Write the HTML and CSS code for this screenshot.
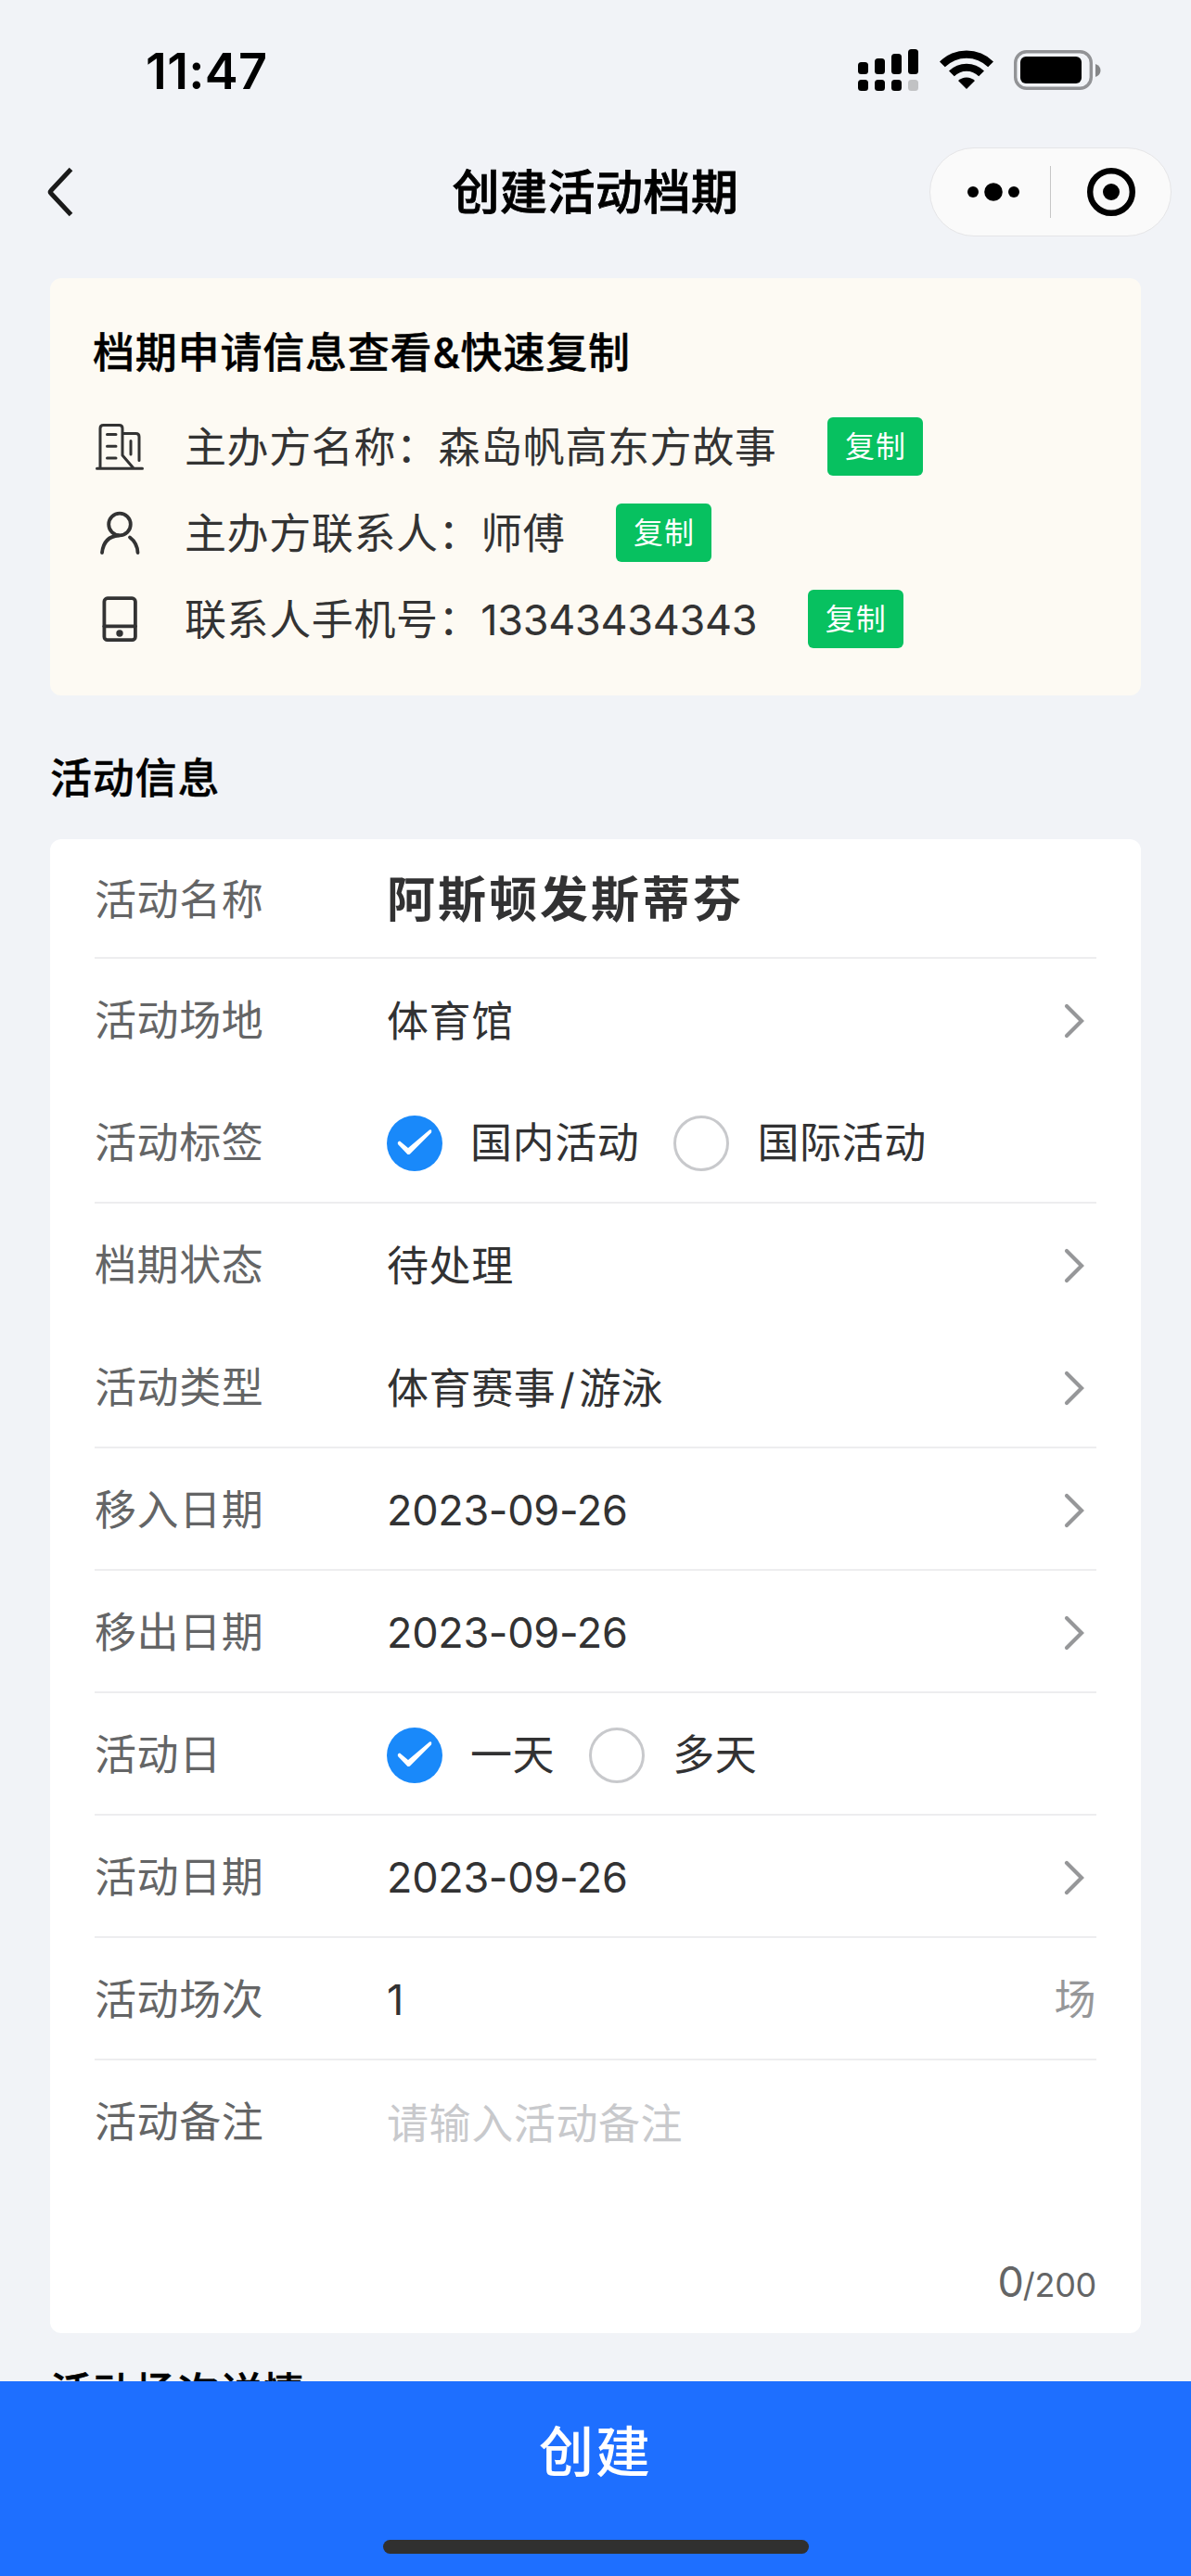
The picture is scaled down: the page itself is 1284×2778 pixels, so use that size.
FILE: index.html
```html
<!DOCTYPE html>
<html lang="zh-CN">
  <head>
    <meta charset="UTF-8" />
    <meta name="viewport" content="width=device-width, initial-scale=1.0" />
    <title>创建活动档期</title>
    <link rel="stylesheet" href="styles.css">
  </head>
  <body>
    <header>
      <div class="status-bar">
        <span class="time">11:47</span>
        <div class="status-icons">
          <svg class="signal" width="66" height="46" viewBox="0 0 66 46">
            <rect x="0" y="14" width="11" height="13" rx="3.5" />
            <rect x="18" y="10" width="11" height="17" rx="3.5" />
            <rect x="36" y="5" width="11" height="22" rx="3.5" />
            <rect x="54" y="0" width="11" height="27" rx="3.5" />
            <rect x="0" y="33" width="11" height="12" rx="3.5" />
            <rect x="18" y="33" width="11" height="12" rx="3.5" />
            <rect x="36" y="33" width="11" height="12" rx="3.5" />
            <rect x="54" y="33" width="11" height="12" rx="3.5" fill="#c1c2c4" />
          </svg>
          <svg class="wifi" width="58" height="42" viewBox="0 0 58 42">
            <path d="M0 12.5A41 41 0 0 1 58 12.5L52.2 18.2A33 33 0 0 0 5.8 18.2Z" />
            <path d="M10 22.5A27 27 0 0 1 48 22.5L42.2 28.2A19 19 0 0 0 15.8 28.2Z" />
            <path d="M20 33A13 13 0 0 1 38 33L29 42Z" />
          </svg>
          <svg class="battery" width="96" height="43" viewBox="0 0 96 43">
            <rect x="1.7" y="1.7" width="81.6" height="39.6" rx="12" fill="none" stroke="#929396" stroke-width="3.4" />
            <rect x="7" y="7" width="66" height="29" rx="6" />
            <path d="M88 15Q93.5 17 93.5 22T88 29Z" fill="#858688" />
          </svg>
        </div>
      </div>
      <div class="nav-bar">
        <svg class="back" width="30" height="54" viewBox="0 0 30 54">
          <path d="M26.5 2.5L5 25.5Q3.5 27 5 28.5L26.5 51.5" />
        </svg>
        <h1>创建活动档期</h1>
        <div class="capsule">
          <svg class="dots" width="58" height="20" viewBox="0 0 58 20">
            <circle cx="7" cy="10" r="6" />
            <circle cx="29" cy="10" r="9.8" />
            <circle cx="51" cy="10" r="6" />
          </svg>
          <i class="capsule-line"></i>
          <svg class="close" width="52" height="52" viewBox="0 0 52 52">
            <circle cx="26" cy="26" r="22.8" fill="none" stroke="#000" stroke-width="6.4" />
            <circle cx="26" cy="26" r="9" />
          </svg>
        </div>
      </div>
    </header>

    <main>
      <section class="apply-card">
        <h2>档期申请信息查看&amp;快速复制</h2>
        <div class="apply-row">
          <svg class="apply-icon" width="58" height="60" viewBox="0 0 58 60">
            <path d="M8 53V10Q8 6.5 11.5 6.5H28.5Q32 6.5 32 10V39L44 53M32 15.5H46.5Q50 15.5 50 19V44.5M41 23.5V38M15.5 16.5H25M15.5 29.3H25M15.5 42H25M4.5 53.3H53.5" />
          </svg>
          <span>主办方名称：森岛帆高东方故事</span>
          <button type="button">复制</button>
        </div>
        <div class="apply-row">
          <svg class="apply-icon bold" width="58" height="60" viewBox="0 0 58 60">
            <circle cx="29" cy="20.5" r="11.8" />
            <path d="M10 51Q12 33.5 28 32.5M40 34.5Q48 40.5 48.5 51" />
          </svg>
          <span>主办方联系人：师傅</span>
          <button type="button">复制</button>
        </div>
        <div class="apply-row">
          <svg class="apply-icon bold" width="58" height="60" viewBox="0 0 58 60">
            <rect x="12.4" y="7.2" width="33.5" height="45" rx="3.5" />
            <path d="M12.4 37.3H45.9" />
            <circle class="solid" cx="29" cy="45" r="3.7" />
          </svg>
          <span>联系人手机号：<b class="num">13343434343</b></span>
          <button type="button">复制</button>
        </div>
      </section>

      <h2 class="section-title">活动信息</h2>
      <section class="form-card">
        <div class="form-row first">
          <label>活动名称</label>
          <div class="value name">阿斯顿发斯蒂芬</div>
        </div>
        <div class="form-row no-line">
          <label>活动场地</label>
          <div class="value">体育馆</div>
          <svg class="arrow" width="24" height="40" viewBox="0 0 24 40"><path d="M4 4L20 20L4 36" /></svg>
        </div>
        <div class="form-row">
          <label>活动标签</label>
          <div class="value radios">
            <svg class="radio on" width="60" height="60" viewBox="0 0 60 60"><circle cx="30" cy="30" r="30" /><path d="M12 31Q11 28 14 27.5L23 35L46 15.5Q49 14.5 48 18.5L25 41.5Q23 42.5 22 41.5Z" /></svg>
            <span>国内活动</span>
            <svg class="radio" width="60" height="60" viewBox="0 0 60 60"><circle cx="30" cy="30" r="28.5" /></svg>
            <span>国际活动</span>
          </div>
        </div>
        <div class="form-row no-line">
          <label>档期状态</label>
          <div class="value">待处理</div>
          <svg class="arrow" width="24" height="40" viewBox="0 0 24 40"><path d="M4 4L20 20L4 36" /></svg>
        </div>
        <div class="form-row">
          <label>活动类型</label>
          <div class="value">体育赛事<span class="slash">/</span>游泳</div>
          <svg class="arrow" width="24" height="40" viewBox="0 0 24 40"><path d="M4 4L20 20L4 36" /></svg>
        </div>
        <div class="form-row">
          <label>移入日期</label>
          <div class="value num">2023-09-26</div>
          <svg class="arrow" width="24" height="40" viewBox="0 0 24 40"><path d="M4 4L20 20L4 36" /></svg>
        </div>
        <div class="form-row">
          <label>移出日期</label>
          <div class="value num">2023-09-26</div>
          <svg class="arrow" width="24" height="40" viewBox="0 0 24 40"><path d="M4 4L20 20L4 36" /></svg>
        </div>
        <div class="form-row">
          <label>活动日</label>
          <div class="value radios">
            <svg class="radio on" width="60" height="60" viewBox="0 0 60 60"><circle cx="30" cy="30" r="30" /><path d="M12 31Q11 28 14 27.5L23 35L46 15.5Q49 14.5 48 18.5L25 41.5Q23 42.5 22 41.5Z" /></svg>
            <span>一天</span>
            <svg class="radio" width="60" height="60" viewBox="0 0 60 60"><circle cx="30" cy="30" r="28.5" /></svg>
            <span>多天</span>
          </div>
        </div>
        <div class="form-row">
          <label>活动日期</label>
          <div class="value num">2023-09-26</div>
          <svg class="arrow" width="24" height="40" viewBox="0 0 24 40"><path d="M4 4L20 20L4 36" /></svg>
        </div>
        <div class="form-row">
          <label>活动场次</label>
          <div class="value num">1</div>
          <span class="unit">场</span>
        </div>
        <div class="form-row no-line">
          <label>活动备注</label>
          <div class="value placeholder">请输入活动备注</div>
        </div>
        <div class="counter">0<small>/200</small></div>
      </section>

      <h2 class="section-title next">活动场次详情</h2>
    </main>

    <footer>
      <span class="submit">创建</span>
      <div class="home-indicator"></div>
    </footer>
  </body>
</html>
```
FILE: styles.css
```css
* {
  box-sizing: border-box;
  margin: 0;
  padding: 0;
}
body {
  width: 1284px;
  height: 2778px;
  display: flex;
  flex-direction: column;
  overflow: hidden;
  background-color: #f1f3f7;
  color: #000;
  font-family: Inter, "Noto Sans CJK SC", sans-serif;
  font-size: 45px;
  letter-spacing: 0.6px;
}
svg {
  display: block;
  flex: none;
}
header {
  height: 300px;
  flex: none;
}

.status-bar {
  display: flex;
  justify-content: space-between;
  height: 154px;
  padding: 53px 95px 0 157px;
}
.time {
  font-size: 54px;
  font-weight: 600;
  line-height: 48px;
  letter-spacing: 0.3px;
}
.status-icons {
  display: flex;
  align-items: flex-start;
}
.wifi {
  margin: 1px 22px 0 22px;
}
.battery {
  margin-top: 1px;
}

.nav-bar {
  display: grid;
  grid-template-columns: 261px 1fr 261px;
  align-items: center;
  height: 106px;
  padding: 0 21px;
}
.back {
  margin-left: 29px;
  fill: none;
  stroke: #1a1a1a;
  stroke-width: 5;
}
h1 {
  padding-top: 2px;
  font-size: 51px;
  font-weight: 500;
  line-height: 70px;
  text-align: center;
  letter-spacing: 0.5px;
  -webkit-text-stroke: 0.8px #000;
}
.capsule {
  display: flex;
  align-items: center;
  height: 96px;
  padding-left: 39px;
  border: 1px solid #e5e5e7;
  border-radius: 48px;
  background-color: #fafafa;
}
.capsule-line {
  width: 1px;
  height: 56px;
  margin: 0 39px 0 32px;
  background-color: #c6c6c6;
}

main {
  height: 2268px;
  flex: none;
  padding: 0 54px;
  overflow: hidden;
}
h2 {
  font-size: 45px;
  font-weight: 500;
  line-height: 60px;
  letter-spacing: 0.8px;
  -webkit-text-stroke: 0.4px #000;
}
.apply-card {
  height: 450px;
  padding: 51px 46px 0;
  border-radius: 12px;
  background-color: #fdfaf3;
}
.apply-card h2 {
  margin-bottom: 24px;
}
.apply-row {
  display: flex;
  align-items: center;
  height: 93px;
  color: #333;
}
.apply-row span {
  padding-bottom: 4px;
}
.apply-icon {
  margin-right: 41px;
  fill: none;
  stroke: #333;
  stroke-width: 3;
  stroke-linecap: round;
  stroke-linejoin: round;
}
.apply-icon.bold {
  stroke-width: 3.8;
}
.apply-icon .solid {
  fill: #333;
  stroke: none;
}
.apply-row button {
  width: 103px;
  height: 63px;
  margin-left: 55px;
  padding-bottom: 5px;
  border: none;
  border-radius: 6px;
  background-color: #07c160;
  color: #fff;
  font-family: inherit;
  font-size: 32px;
  letter-spacing: 1px;
}
.num {
  font-weight: 400;
  letter-spacing: -0.3px;
}

.section-title {
  margin: 60px 0 35px;
}
.section-title.next {
  margin-top: 35px;
}
.form-card {
  height: 1611px;
  padding: 0 48px;
  border-radius: 12px;
  background-color: #fff;
}
.form-row {
  display: flex;
  align-items: center;
  height: 132px;
  padding-top: 4px;
  border-bottom: 2px solid #ededef;
}
.form-row.first {
  height: 129px;
}
.form-row.no-line {
  border-bottom-color: transparent;
}
.form-row label {
  width: 315px;
  padding-bottom: 7px;
  color: #646566;
}
.value {
  flex: 1;
  padding-bottom: 6px;
  color: #323233;
}
.value.num {
  padding-bottom: 1px;
}
.value.radios {
  padding-bottom: 0;
}
.value.name {
  padding-bottom: 9px;
  font-size: 52px;
  font-weight: 700;
  letter-spacing: 3px;
}
.value.placeholder {
  padding-bottom: 4px;
  color: #c8c9cc;
}
.slash {
  padding: 0 4px;
}
.radios {
  display: flex;
  align-items: center;
}
.radios span {
  margin: 0 37px 0 30px;
  padding-bottom: 7px;
}
.radio {
  fill: none;
  stroke: #c8c9cc;
  stroke-width: 3;
}
.radio.on {
  stroke: none;
}
.radio.on circle {
  fill: #1989fa;
}
.radio.on path {
  fill: #fff;
}
.arrow {
  margin-right: 12px;
  fill: none;
  stroke: #969799;
  stroke-width: 4.2;
  stroke-linecap: round;
}
.unit {
  padding-bottom: 7px;
  color: #969799;
}
.counter {
  margin: 77px 0 0;
  color: #646566;
  line-height: 60px;
  letter-spacing: -1px;
  text-align: right;
}
.counter small {
  font-size: 36px;
  letter-spacing: -0.3px;
}

footer {
  display: flex;
  flex-direction: column;
  align-items: center;
  justify-content: space-between;
  height: 210px;
  flex: none;
  padding: 37px 0 24px;
  background-color: #1e6fff;
}
.submit {
  color: #fff;
  font-size: 59px;
  font-weight: 500;
  line-height: 80px;
  letter-spacing: 2px;
}
.home-indicator {
  width: 459px;
  height: 15px;
  border-radius: 8px;
  background-color: #303030;
}
```
